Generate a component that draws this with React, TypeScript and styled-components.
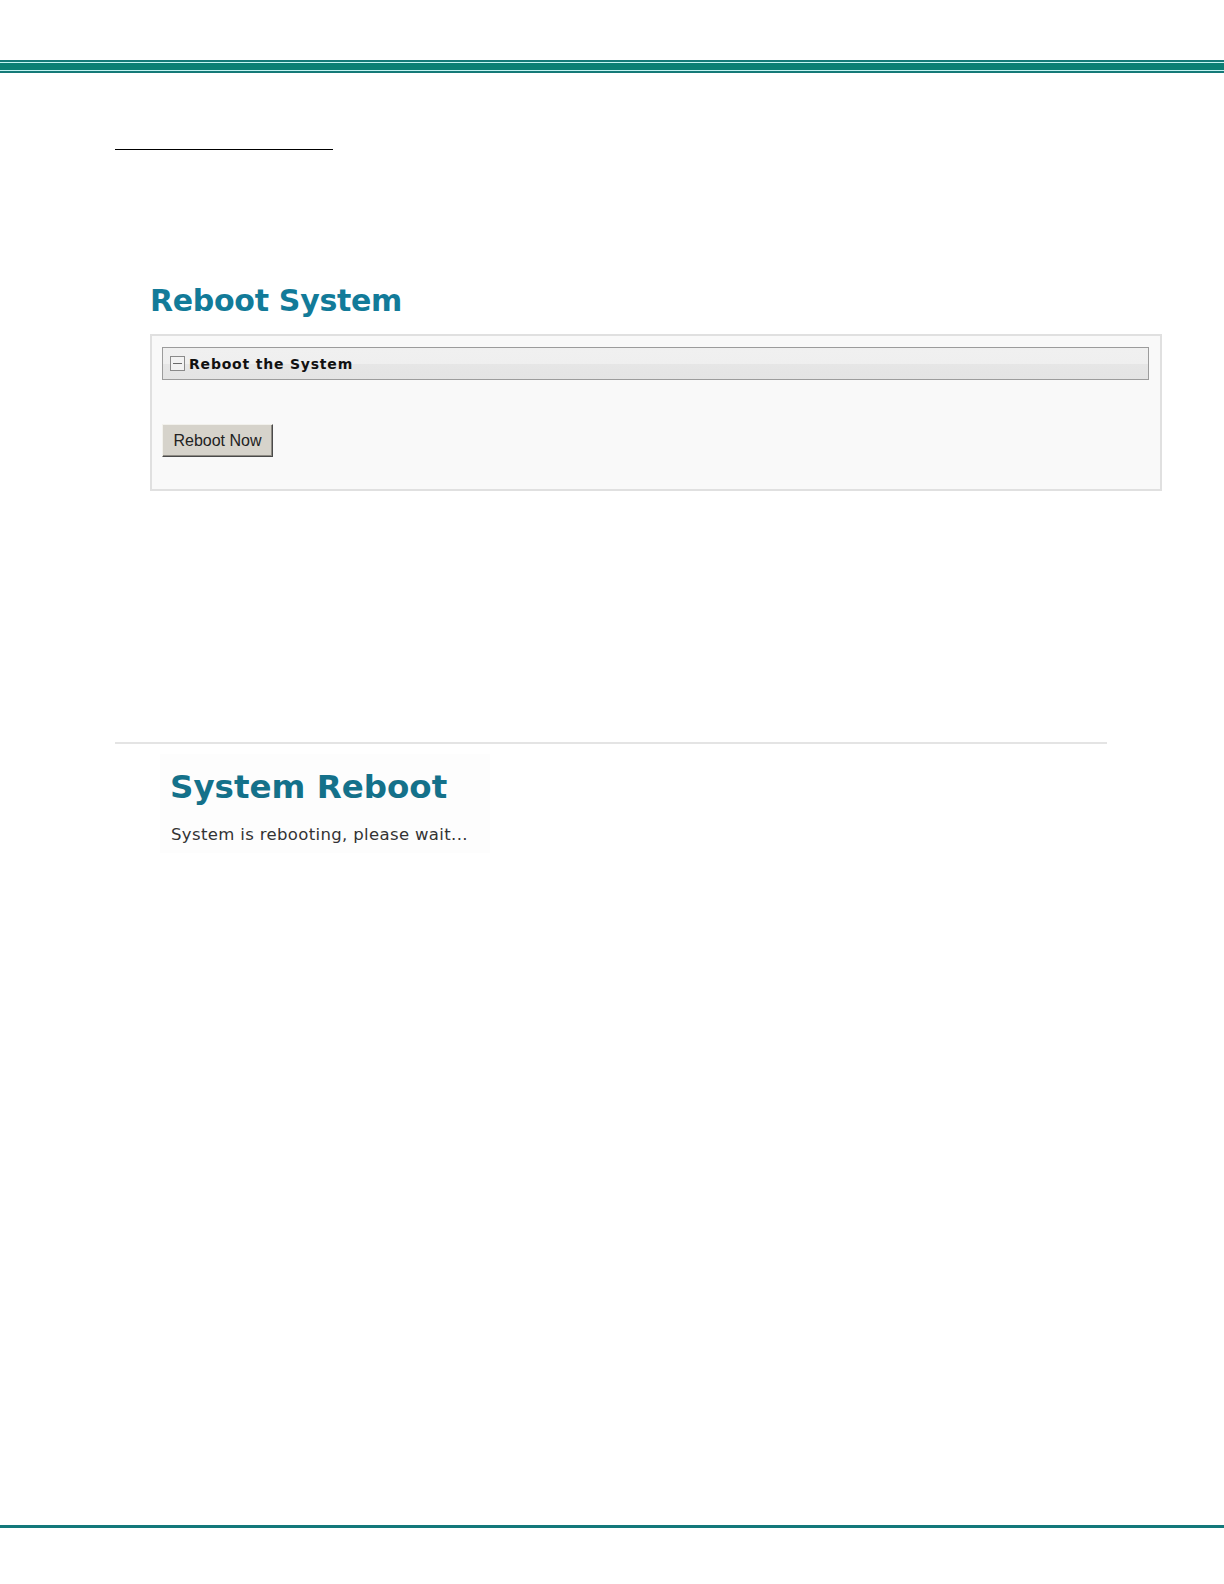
import styled, { createGlobalStyle } from "styled-components";

const GlobalStyle = createGlobalStyle`
  html, body {
    margin: 0;
    padding: 0;
    background: #ffffff;
  }
  body {
    font-family: "DejaVu Sans", Verdana, sans-serif;
  }
`;

const Page = styled.div`
  width: 1224px;
  height: 1584px;
  display: flex;
  flex-direction: column;
  overflow: hidden;
`;

const TopBand = styled.div`
  margin-top: 60px;
  display: flex;
  flex-direction: column;
`;

const Stripe = styled.div<{ $h: number; $color: string }>`
  height: ${(p) => p.$h}px;
  background: ${(p) => p.$color};
`;

const Underline = styled.div`
  margin: 76px 0 0 115px;
  width: 218px;
  height: 1px;
  background: #000;
`;

const Title = styled.h1<{ $color: string; $size: number; $spacing: number }>`
  margin: 0;
  font-family: "DejaVu Sans", Verdana, sans-serif;
  font-weight: bold;
  font-size: ${(p) => p.$size}px;
  letter-spacing: ${(p) => p.$spacing}px;
  line-height: 38px;
  color: ${(p) => p.$color};
`;

const Section = styled.section`
  margin: 132px 0 0 150px;
  width: 1012px;
`;

const Panel = styled.div`
  margin-top: 14px;
  height: 157px;
  box-sizing: border-box;
  border: 2px solid #e0e0e0;
  background: #f9f9f9;
  padding: 11px 11px 0 10px;
`;

const PanelHeader = styled.div`
  height: 33px;
  box-sizing: border-box;
  border: 1px solid #9c9c9c;
  background: linear-gradient(#f0f0f0 0%, #efefef 50%, #e6e6e6 50%, #e4e4e4 100%);
  display: flex;
  align-items: center;
  gap: 4px;
  padding-left: 7px;
`;

const PanelTitle = styled.span`
  font-family: "DejaVu Sans", Verdana, sans-serif;
  font-weight: bold;
  font-size: 14px;
  letter-spacing: 0.8px;
  color: #111;
`;

const Button = styled.button`
  margin-top: 44px;
  width: 111px;
  height: 33px;
  box-sizing: border-box;
  background: #d6d3cb;
  border: 1px solid;
  border-color: #f2f1ec #4a4a4a #4a4a4a #f2f1ec;
  box-shadow: inset -1px -1px 0 #8e8b84;
  font-family: "Liberation Sans", Arial, sans-serif;
  font-size: 16px;
  color: #222;
  padding: 0;
  cursor: pointer;
`;

const Rule = styled.div`
  margin: 251px 0 0 115px;
  width: 992px;
  height: 2px;
  background: #e4e4e4;
`;

const Shot = styled.div`
  margin: 10px 0 0 160px;
  width: 320px;
  padding: 14px 0 8px 10px;
  background: #fdfdfd;
`;

const Message = styled.p`
  margin: 19px 0 0 1px;
  font-family: "DejaVu Sans", Verdana, sans-serif;
  font-size: 16.5px;
  letter-spacing: 0.35px;
  line-height: 20px;
  color: #333;
`;

const BottomLine = styled.div`
  margin-top: auto;
  margin-bottom: 56px;
  height: 3px;
  background: #13787a;
`;

function MinusBox() {
  return (
    <svg width="15" height="15" viewBox="0 0 15 15">
      <rect x="0.5" y="0.5" width="14" height="14" fill="#f2f2f2" stroke="#8a8a8a" />
      <line x1="3" y1="7.5" x2="12" y2="7.5" stroke="#6a6a6a" strokeWidth="1" />
    </svg>
  );
}

function App() {
  return (
    <>
      <GlobalStyle />
      <Page>
        <TopBand>
          <Stripe $h={2} $color="#157a78" />
          <Stripe $h={1} $color="#c4f4f2" />
          <Stripe $h={7} $color="#0b7f74" />
          <Stripe $h={1} $color="#c4f4f2" />
          <Stripe $h={2} $color="#157a78" />
        </TopBand>
        <Underline />
        <Section>
          <Title $color="#127b99" $size={30} $spacing={-0.3}>
            Reboot System
          </Title>
          <Panel>
            <PanelHeader>
              <MinusBox />
              <PanelTitle>Reboot the System</PanelTitle>
            </PanelHeader>
            <Button>Reboot Now</Button>
          </Panel>
        </Section>
        <Rule />
        <Shot>
          <Title $color="#14718a" $size={32.5} $spacing={0}>
            System Reboot
          </Title>
          <Message>System is rebooting, please wait...</Message>
        </Shot>
        <BottomLine />
      </Page>
    </>
  );
}

export default App;
